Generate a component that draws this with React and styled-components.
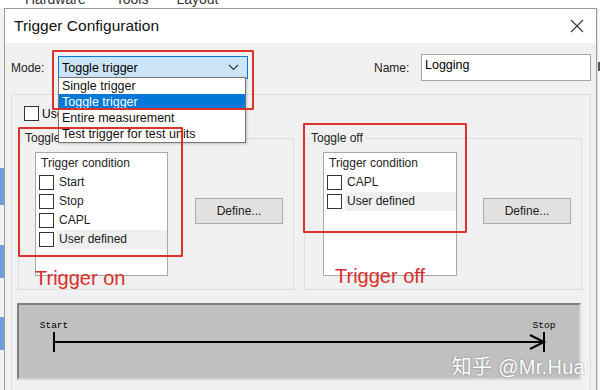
import React from 'react'
import styled, { createGlobalStyle } from 'styled-components'

const GlobalStyle = createGlobalStyle`
  html, body {
    margin: 0;
    padding: 0;
    background: #fff;
    overflow: hidden;
  }
  body {
    font-family: "Liberation Sans", Arial, sans-serif;
    font-size: 12px;
    color: #000;
  }
`

const Screen = styled.div`
  position: relative;
  width: 600px;
  height: 390px;
  overflow: hidden;
  display: flex;
  flex-direction: column;
  background: #fff;
`

const MenuStrip = styled.div`
  height: 8px;
  flex-shrink: 0;
  overflow: hidden;
  display: flex;
  padding-left: 25px;
  font-size: 14px;
  line-height: 14px;
  color: #333;
`

const MenuItem = styled.span`
  margin-top: -8px;
  margin-right: ${p => p.$gap}px;
`

const Workspace = styled.div`
  flex: 1;
  display: flex;
  min-height: 0;
`

const Backdrop = styled.div`
  width: 4px;
  flex-shrink: 0;
  background: #f2f2f2;
  display: flex;
  flex-direction: column;
`

const BackBlock = styled.div`
  height: ${p => p.$h}px;
  margin-top: ${p => p.$top}px;
  background: ${p => p.$color};
`

const RightEdge = styled.div`
  width: 5px;
  flex-shrink: 0;
  background: #fafafa;
  border-left: 1px solid #e4e4e4;
  display: flex;
  flex-direction: column;
`

const EdgeMark = styled.div`
  width: 3px;
  height: 9px;
  margin-top: 54px;
  background: #555;
`

const Dialog = styled.div`
  flex: 1;
  display: flex;
  flex-direction: column;
  background: #f0f0f0;
  border: 1px solid #9a9a9a;
  border-bottom: none;
`

const TitleBar = styled.div`
  height: 34px;
  flex-shrink: 0;
  display: flex;
  align-items: center;
  justify-content: space-between;
  padding: 0 12px 0 9px;
  background: #fff;
`

const Title = styled.span`
  font-size: 15.5px;
  color: #111;
`

const Body = styled.div`
  flex: 1;
  padding: 0 5px 0 6px;
  display: flex;
  flex-direction: column;
`

const ModeRow = styled.div`
  height: 27px;
  margin-top: 11px;
  display: flex;
  align-items: center;
`

const FieldLabel = styled.span`
  width: ${p => p.$w}px;
  color: #222;
`

const Combo = styled.div`
  width: 190px;
  height: 23px;
  box-sizing: border-box;
  display: flex;
  align-items: center;
  justify-content: space-between;
  padding: 0 8px 0 3px;
  background: #cce4f7;
  border: 1px solid #0078d7;
  font-size: 12.5px;
`

const Spacer = styled.div`
  flex: 1;
`

const NameInput = styled.div`
  width: 170px;
  height: 27px;
  box-sizing: border-box;
  padding: 3px 0 0 3px;
  background: #fff;
  border: 1px solid #a5a5a5;
  font-size: 12.5px;
`

const Panel = styled.div`
  margin-top: 13px;
  flex: 1;
  border: 1px solid #dcdcdc;
  border-bottom: none;
  padding: 11px 8px 0 6px;
  display: flex;
  flex-direction: column;
`

const CheckRow = styled.div`
  display: flex;
  align-items: center;
  gap: 3px;
  margin-left: 6px;
  height: 15px;
`

const Box = styled.span`
  width: ${p => p.$size}px;
  height: ${p => p.$size}px;
  box-sizing: border-box;
  flex-shrink: 0;
  background: #fff;
  border: 1px solid #333;
`

const Groups = styled.div`
  display: flex;
  gap: 10px;
  margin-top: 9px;
`

const GroupBox = styled.fieldset`
  margin: 0;
  min-width: 0;
  border: 1px solid #dcdcdc;
  border-radius: 0;
  padding: 6px 10px 13px ${p => p.$inset}px;
  display: flex;
  align-items: flex-start;
  gap: ${p => p.$gap}px;
`

const Legend = styled.legend`
  padding: 0 2px;
  margin-left: ${p => 4 - p.$inset}px;
  line-height: 16px;
  color: #222;
`

const ListBox = styled.div`
  width: ${p => p.$w}px;
  height: 124px;
  box-sizing: border-box;
  background: #fff;
  border: 1px solid #a8a8a8;
  padding-top: 1px;
`

const ListHeader = styled.div`
  height: 19px;
  line-height: 19px;
  padding-left: 5px;
  color: #222;
`

const ListItem = styled.div`
  height: 19px;
  display: flex;
  align-items: center;
  padding-left: 3px;
  gap: 3px;
`

const ItemText = styled.span`
  flex: 1;
  height: 19px;
  line-height: 19px;
  padding-left: 2px;
  background: ${p => (p.$hl ? '#efefef' : 'transparent')};
  color: #222;
`

const DefineButton = styled.div`
  width: 88px;
  height: 26px;
  box-sizing: border-box;
  margin-top: 46px;
  display: flex;
  align-items: center;
  justify-content: center;
  background: #e1e1e1;
  border: 1px solid #adadad;
  color: #222;
`

const Timeline = styled.div`
  margin-top: 13px;
  margin-left: -1px;
  width: 564px;
  height: 77px;
  box-sizing: border-box;
  background: #c0c0c0;
  border: 2px solid;
  border-color: #808080 #d6d6d6 #d6d6d6 #808080;
`

const Dropdown = styled.div`
  position: absolute;
  left: 58px;
  top: 77px;
  width: 188px;
  box-sizing: border-box;
  background: #fff;
  border: 1px solid #767676;
  box-shadow: 1px 1px 2px rgba(0, 0, 0, 0.2);
  font-size: 12.5px;
`

const DropItem = styled.div`
  height: 16px;
  line-height: 16px;
  padding-left: 3px;
  background: ${p => (p.$active ? '#0078d7' : '#fff')};
  color: ${p => (p.$active ? '#fff' : '#111')};
`

const Mark = styled.div`
  position: absolute;
  left: ${p => p.$x}px;
  top: ${p => p.$y}px;
  width: ${p => p.$w}px;
  height: ${p => p.$h}px;
  box-sizing: border-box;
  border: 2px solid #d8342d;
  border-radius: 1px;
`

const Note = styled.div`
  position: absolute;
  left: ${p => p.$x}px;
  top: ${p => p.$y}px;
  font-size: 20px;
  line-height: 20px;
  color: #d8302b;
`

const Watermark = styled.div`
  position: absolute;
  right: 15px;
  top: 351px;
  white-space: nowrap;
  font-family: "Liberation Sans", "Noto Sans CJK SC", sans-serif;
  font-size: 20px;
  letter-spacing: 0.3px;
  color: #fff;
  text-shadow: 0 0 2px rgba(0, 0, 0, 0.4);
`

const CloseIcon = () => (
  <svg width="14" height="14" viewBox="0 0 14 14">
    <path d="M1 1 L13 13 M13 1 L1 13" stroke="#333" strokeWidth="1.1" />
  </svg>
)

const Chevron = () => (
  <svg width="11" height="7" viewBox="0 0 11 7">
    <path d="M1 1 L5.5 5.5 L10 1" fill="none" stroke="#333" strokeWidth="1.1" />
  </svg>
)

const ConditionList = ({ width, items }) => (
  <ListBox $w={width}>
    <ListHeader>Trigger condition</ListHeader>
    {items.map(item => (
      <ListItem key={item}>
        <Box $size={15} />
        <ItemText $hl={item === 'User defined'}>{item}</ItemText>
      </ListItem>
    ))}
  </ListBox>
)

const TimeAxis = () => (
  <svg width="100%" height="100%" viewBox="0 0 560 73">
    <g fontFamily='"Liberation Mono", monospace' fontSize="9.5" fill="#000">
      <text x="35" y="23" textAnchor="middle">Start</text>
      <text x="525" y="23" textAnchor="middle">Stop</text>
    </g>
    <g stroke="#000" strokeWidth="2" fill="none">
      <path d="M35 27 V47" />
      <path d="M35 37 H525" />
      <path d="M525 27 V47" />
      <path d="M511 30 L525 37 L511 44" />
    </g>
  </svg>
)

const App = () => {
  const modes = ['Single trigger', 'Toggle trigger', 'Entire measurement', 'Test trigger for test units']

  return (
    <Screen>
      <GlobalStyle />
      <MenuStrip>
        <MenuItem $gap={30}>Hardware</MenuItem>
        <MenuItem $gap={28}>Tools</MenuItem>
        <MenuItem $gap={0}>Layout</MenuItem>
      </MenuStrip>
      <Workspace>
        <Backdrop>
          <BackBlock $top={160} $h={37} $color="#6d9fd8" />
          <BackBlock $top={40} $h={33} $color="#6d9fd8" />
          <BackBlock $top={39} $h={33} $color="#6d9fd8" />
        </Backdrop>
        <Dialog>
          <TitleBar>
            <Title>Trigger Configuration</Title>
            <CloseIcon />
          </TitleBar>
          <Body>
            <ModeRow>
              <FieldLabel $w={47}>Mode:</FieldLabel>
              <Combo>
                <span>Toggle trigger</span>
                <Chevron />
              </Combo>
              <Spacer />
              <FieldLabel $w={47}>Name:</FieldLabel>
              <NameInput>Logging</NameInput>
            </ModeRow>
            <Panel>
              <CheckRow>
                <Box $size={15} />
                <span>Use separate conditions</span>
              </CheckRow>
              <Groups>
                <GroupBox $inset={16} $gap={27}>
                  <Legend $inset={16}>Toggle on</Legend>
                  <ConditionList width={133} items={['Start', 'Stop', 'CAPL', 'User defined']} />
                  <DefineButton>Define...</DefineButton>
                </GroupBox>
                <GroupBox $inset={18} $gap={26}>
                  <Legend $inset={18}>Toggle off</Legend>
                  <ConditionList width={134} items={['CAPL', 'User defined']} />
                  <DefineButton>Define...</DefineButton>
                </GroupBox>
              </Groups>
              <Timeline>
                <TimeAxis />
              </Timeline>
            </Panel>
          </Body>
        </Dialog>
        <RightEdge>
          <EdgeMark />
        </RightEdge>
      </Workspace>

      <Dropdown>
        {modes.map(m => (
          <DropItem key={m} $active={m === 'Toggle trigger'}>{m}</DropItem>
        ))}
      </Dropdown>

      <Mark $x={52} $y={50} $w={202} $h={60} />
      <Mark $x={18} $y={127} $w={165} $h={130} />
      <Mark $x={303} $y={123} $w={164} $h={110} />
      <Note $x={35} $y={268}>Trigger on</Note>
      <Note $x={335} $y={266}>Trigger off</Note>
      <Watermark>知乎 @Mr.Hua</Watermark>
    </Screen>
  )
}

export default App
